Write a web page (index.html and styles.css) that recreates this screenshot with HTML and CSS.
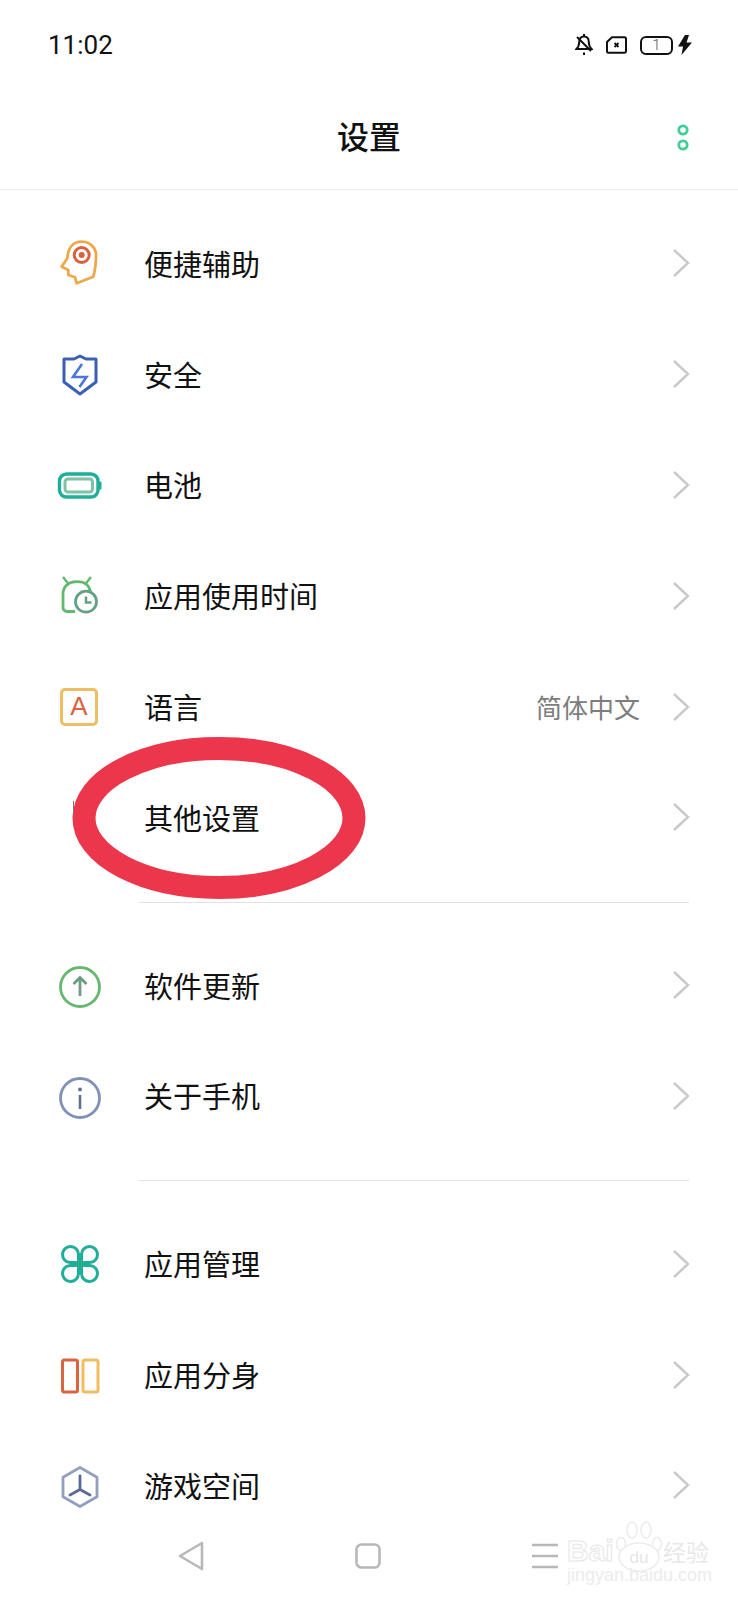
FILE: index.html
```html
<!DOCTYPE html>
<html lang="zh-CN">
<head>
    <meta charset="UTF-8">
    <meta name="viewport" content="width=device-width, initial-scale=1.0">
    <title>设置</title>
    <link rel="stylesheet" href="styles.css">
</head>
<body>
    <div class="phone">
        <div class="status-bar">
            <span class="time">11:02</span>
            <div class="status-icons">
                <svg class="ic-bell" width="18" height="22" viewBox="0 0 18 22">
                    <path d="M9 2.500c3.200 0 4.800 2.500 4.800 5.500 0 3.500 1 5.300 2.700 7H1.500c1.700-1.700 2.700-3.500 2.700-7 0-3 1.600-5.500 4.800-5.500z" fill="none" stroke="#111" stroke-width="2"/>
                    <path d="M2 3l14 14" stroke="#111" stroke-width="2"/>
                    <path d="M9 0v2M9 18.500v2.500" stroke="#111" stroke-width="2"/>
                </svg>
                <svg class="ic-sim" width="21" height="18" viewBox="0 0 21 18">
                    <path d="M6 1.200h12.500a1.500 1.500 0 0 1 1.500 1.500v12.600a1.500 1.500 0 0 1-1.500 1.500h-16a1.500 1.500 0 0 1-1.500-1.500V6z" fill="none" stroke="#111" stroke-width="2"/>
                    <path d="M8.500 7l4 4M12.500 7l-4 4" stroke="#111" stroke-width="1.800"/>
                </svg>
                <div class="battery"><span>1</span></div>
                <svg class="ic-bolt" width="14" height="20" viewBox="0 0 14 20">
                    <path d="M7 0L0 11.500h5L3.500 20 14 7.500H8.500L11 0z" fill="#111"/>
                </svg>
            </div>
        </div>

        <div class="title-bar">
            <span></span>
            <h1>设置</h1>
            <svg class="more" width="14" height="30" viewBox="0 0 14 30">
                <circle cx="7" cy="7" r="4.200" fill="none" stroke="#43cd97" stroke-width="2.800"/>
                <circle cx="7" cy="22" r="4.200" fill="none" stroke="#43cd97" stroke-width="2.800"/>
            </svg>
        </div>

        <div class="list">
            <div class="group">
                <div class="row">
                    <svg class="icon" viewBox="0 2 44 44">
                        <path d="M35.300 35.700C37.500 28 38 20 38 14 38 6 31 .7 23.700 .7 15 .7 10 7 9.300 17.300L3.700 25.700 10.300 29V34L17 36.300 18.700 42.300z" fill="none" stroke="#eba94c" stroke-width="2.800" stroke-linejoin="round"/>
                        <circle cx="23.700" cy="14" r="7.500" fill="none" stroke="#d8623f" stroke-width="3"/>
                        <circle cx="23.700" cy="14" r="3" fill="#d8623f"/>
                    </svg>
                    <span class="label">便捷辅助</span>
                    <svg class="chevron" viewBox="0 0 18 30"><path d="M2 2l14 13L2 28"/></svg>
                </div>
                <div class="row">
                    <svg class="icon" viewBox="0 1 44 44">
                        <path d="M22 3l6 3h10v23L22 41 6 29V6h10z" fill="none" stroke="#3a5fb4" stroke-width="3" stroke-linejoin="round"/>
                        <path d="M24 11l-9 13h13.500l-7 10" fill="none" stroke="#4b75d8" stroke-width="2.600"/>
                    </svg>
                    <span class="label">安全</span>
                    <svg class="chevron" viewBox="0 0 18 30"><path d="M2 2l14 13L2 28"/></svg>
                </div>
                <div class="row">
                    <svg class="icon" viewBox="0 0 44 44">
                        <rect x="1.500" y="9" width="38.500" height="23" rx="7" fill="none" stroke="#1fae97" stroke-width="3.400"/>
                        <rect x="7" y="14" width="27.500" height="13" rx="3" fill="none" stroke="#7cc2a3" stroke-width="3"/>
                        <path d="M41 16.500h1.500a1 1 0 0 1 1 1v6a1 1 0 0 1-1 1H41z" fill="#1fae97"/>
                    </svg>
                    <span class="label">电池</span>
                    <svg class="chevron" viewBox="0 0 18 30"><path d="M2 2l14 13L2 28"/></svg>
                </div>
                <div class="row">
                    <svg class="icon" viewBox="0 0 44 44">
                        <path d="M17 35.500H9a4 4 0 0 1-4-4V18C5 10 11 5.700 19 5.700s13 4 13.500 11" fill="none" stroke="#63b86f" stroke-width="2.800"/>
                        <path d="M5 1l6 7.500M33 1l-6 7.500" stroke="#63b86f" stroke-width="2.500"/>
                        <circle cx="28" cy="25.700" r="10.500" fill="#fff" stroke="#64a085" stroke-width="2.800"/>
                        <path d="M28 20.500v6h5.500" fill="none" stroke="#64a085" stroke-width="2.500"/>
                    </svg>
                    <span class="label">应用使用时间</span>
                    <svg class="chevron" viewBox="0 0 18 30"><path d="M2 2l14 13L2 28"/></svg>
                </div>
                <div class="row">
                    <div class="icon lang-box">A</div>
                    <span class="label">语言</span>
                    <span class="value">简体中文</span>
                    <svg class="chevron" viewBox="0 0 18 30"><path d="M2 2l14 13L2 28"/></svg>
                </div>
                <div class="row">
                    <span class="icon"></span>
                    <span class="label">其他设置</span>
                    <svg class="chevron" viewBox="0 0 18 30"><path d="M2 2l14 13L2 28"/></svg>
                </div>
            </div>

            <div class="group">
                <div class="row">
                    <svg class="icon" viewBox="0 0 44 44">
                        <circle cx="22" cy="22" r="19.500" fill="none" stroke="#64b86f" stroke-width="2.800"/>
                        <path d="M15.500 19L22 12.500 28.500 19M22 13v18" fill="none" stroke="#6e9d84" stroke-width="2.800"/>
                    </svg>
                    <span class="label">软件更新</span>
                    <svg class="chevron" viewBox="0 0 18 30"><path d="M2 2l14 13L2 28"/></svg>
                </div>
                <div class="row">
                    <svg class="icon" viewBox="0 0 44 44">
                        <circle cx="22" cy="22" r="19.500" fill="none" stroke="#8090b8" stroke-width="2.800"/>
                        <circle cx="22" cy="13.500" r="2" fill="#5f7099"/>
                        <path d="M22 19v14" stroke="#5f7099" stroke-width="2.600"/>
                    </svg>
                    <span class="label">关于手机</span>
                    <svg class="chevron" viewBox="0 0 18 30"><path d="M2 2l14 13L2 28"/></svg>
                </div>
            </div>

            <div class="group">
                <div class="row">
                    <svg class="icon" viewBox="0 2 44 44">
                        <g fill="none" stroke="#1fae97" stroke-width="3">
                            <path d="M20.500 20.500h-8.500a8 8 0 1 1 8.500-8.500z"/>
                            <path d="M23.500 20.500h8.500a8 8 0 1 0-8.500-8.500z"/>
                            <path d="M20.500 23.500h-8.500a8 8 0 1 0 8.500 8.500z"/>
                            <path d="M23.500 23.500h8.500a8 8 0 1 1-8.500 8.500z"/>
                        </g>
                    </svg>
                    <span class="label">应用管理</span>
                    <svg class="chevron" viewBox="0 0 18 30"><path d="M2 2l14 13L2 28"/></svg>
                </div>
                <div class="row">
                    <svg class="icon" viewBox="0 1 44 44">
                        <rect x="4.500" y="6" width="15" height="32" rx="2" fill="none" stroke="#d9643f" stroke-width="3"/>
                        <rect x="25" y="6" width="15" height="32" rx="2" fill="none" stroke="#f0bd60" stroke-width="3"/>
                    </svg>
                    <span class="label">应用分身</span>
                    <svg class="chevron" viewBox="0 0 18 30"><path d="M2 2l14 13L2 28"/></svg>
                </div>
                <div class="row">
                    <svg class="icon" viewBox="0 0 44 44">
                        <path d="M22 2.500l17 9.700v19.600l-17 9.700-17-9.700V12.200z" fill="none" stroke="#959fc0" stroke-width="2.800" stroke-linejoin="round"/>
                        <path d="M22 11v13.500M22 24.500l-10 5.500M22 24.500l10 5.500" fill="none" stroke="#5a6b98" stroke-width="2.800" stroke-linecap="round"/>
                    </svg>
                    <span class="label">游戏空间</span>
                    <svg class="chevron" viewBox="0 0 18 30"><path d="M2 2l14 13L2 28"/></svg>
                </div>
            </div>
        </div>

        <div class="nav-bar">
            <svg width="26" height="30" viewBox="0 0 26 30">
                <path d="M24 2L2 15l22 13z" fill="none" stroke="#b8b8b8" stroke-width="2.600" stroke-linejoin="round"/>
            </svg>
            <svg width="26" height="26" viewBox="0 0 26 26">
                <rect x="1.500" y="1.500" width="23" height="23" rx="5" fill="none" stroke="#b8b8b8" stroke-width="2.600"/>
            </svg>
            <svg width="26" height="26" viewBox="0 0 26 26">
                <path d="M0 2h26M0 13h26M0 24h26" stroke="#b8b8b8" stroke-width="2.600"/>
            </svg>
        </div>

        <svg class="circle-mark" width="294" height="164" viewBox="0 0 294 164">
            <ellipse cx="147" cy="81" rx="135" ry="69.500" fill="none" stroke="#ec364b" stroke-width="23"/>
            <path d="M1.500 64v14" stroke="#8a6f78" stroke-width="1"/>
        </svg>

        <div class="watermark">
            <svg class="paw" width="52" height="54" viewBox="0 0 52 54">
                <g fill="#fff" stroke="#ececec" stroke-width="1.500">
                    <ellipse cx="8" cy="24" rx="4.500" ry="6.500"/>
                    <ellipse cx="19" cy="10" rx="5" ry="8"/>
                    <ellipse cx="33" cy="10" rx="5" ry="8"/>
                    <ellipse cx="44" cy="24" rx="4.500" ry="6.500"/>
                    <ellipse cx="26" cy="37" rx="20" ry="14"/>
                </g>
                <text x="26" y="43" text-anchor="middle" class="paw-text">du</text>
            </svg>
            <span class="wm-bai">Bai</span>
            <span class="wm-cn">经验</span>
            <span class="wm-url">jingyan.baidu.com</span>
        </div>
    </div>
</body>
</html>
```

FILE: styles.css
```css
body {
    margin: 0;
    background: #fff;
    font-family: "Noto Sans CJK SC", "Noto Sans", sans-serif;
    color: #111;
}

.phone {
    position: relative;
    width: 738px;
    height: 1600px;
    display: flex;
    flex-direction: column;
    overflow: hidden;
    background: #fff;
}

.status-bar {
    height: 90px;
    flex: none;
    display: flex;
    align-items: center;
    justify-content: space-between;
    padding: 0 46px 0 48px;
}

.time {
    font-family: Roboto, sans-serif;
    font-size: 26px;
    font-weight: 400;
    color: #111;
}

.status-icons {
    display: flex;
    align-items: center;
}

.ic-sim {
    margin-left: 13px;
}

.battery {
    position: relative;
    width: 29px;
    height: 15px;
    margin-left: 13px;
    border: 2px solid #111;
    border-radius: 6px;
    display: flex;
    align-items: center;
    justify-content: center;
    font-family: Roboto, sans-serif;
    font-size: 15px;
    font-weight: 300;
    color: #555;
}

.ic-bolt {
    margin-left: 5px;
}

.title-bar {
    height: 100px;
    flex: none;
    display: grid;
    grid-template-columns: 1fr auto 1fr;
    align-items: center;
    padding: 0 48px 4px 0;
    box-sizing: border-box;
    border-bottom: 1px solid #eeeeee;
}

.title-bar h1 {
    margin: 0 0 6px 48px;
    font-size: 32px;
    font-weight: 500;
    line-height: 40px;
}

.more {
    justify-self: end;
}

.list {
    flex: 1;
    min-height: 0;
    overflow: hidden;
}

.group {
    padding: 20px 48px 27px 58px;
    position: relative;
}

.group + .group {
    padding-top: 30px;
}

.group + .group::before {
    content: "";
    position: absolute;
    top: 0;
    left: 139px;
    right: 49px;
    height: 1px;
    background: #e2e2e2;
}

.row {
    height: 110.8px;
    display: flex;
    align-items: center;
}

.icon {
    width: 44px;
    height: 44px;
    flex: none;
    margin-right: 42px;
    overflow: visible;
}

.label {
    flex: 1;
    padding-bottom: 5px;
    font-size: 29px;
    line-height: 40px;
    color: #111;
}

.value {
    margin-right: 32px;
    padding-bottom: 5px;
    font-size: 26px;
    color: #7d7d7d;
}

.chevron {
    width: 18px;
    height: 30px;
    flex: none;
    margin-top: -4px;
    fill: none;
    stroke: #c9c9c9;
    stroke-width: 2.400;
}

.lang-box {
    box-sizing: border-box;
    width: 38px;
    height: 38px;
    margin-left: 2px;
    margin-right: 46px;
    margin-bottom: 4px;
    border: 3px solid #f0bd60;
    border-radius: 5px;
    display: flex;
    align-items: center;
    justify-content: center;
    font-family: "Liberation Sans", sans-serif;
    font-size: 26px;
    color: #d9643f;
}

.nav-bar {
    height: 78px;
    flex: none;
    background: #fff;
    display: flex;
    align-items: center;
    justify-content: space-between;
    padding: 0 180px 10px 178px;
    box-sizing: border-box;
}

.circle-mark {
    position: absolute;
    left: 72px;
    top: 737px;
}

.watermark {
    position: absolute;
    left: 567px;
    top: 1520px;
    width: 150px;
    height: 70px;
    color: #ececec;
    pointer-events: none;
}

.paw {
    position: absolute;
    left: 46px;
    top: 0;
}

.paw-text {
    font-family: "Liberation Sans", sans-serif;
    font-size: 17px;
    fill: #e6e6e6;
}

.wm-bai {
    position: absolute;
    left: 0;
    top: 16px;
    font-family: "Liberation Sans", sans-serif;
    font-size: 30px;
    font-weight: 700;
    line-height: 30px;
    color: #fff;
    -webkit-text-stroke: 1px #e6e6e6;
}

.wm-cn {
    position: absolute;
    left: 96px;
    top: 16px;
    font-size: 23px;
    line-height: 30px;
    color: #e8e8e8;
}

.wm-url {
    position: absolute;
    left: 0;
    top: 45px;
    font-family: "Liberation Sans", sans-serif;
    font-size: 18px;
    line-height: 20px;
    white-space: nowrap;
}
```
